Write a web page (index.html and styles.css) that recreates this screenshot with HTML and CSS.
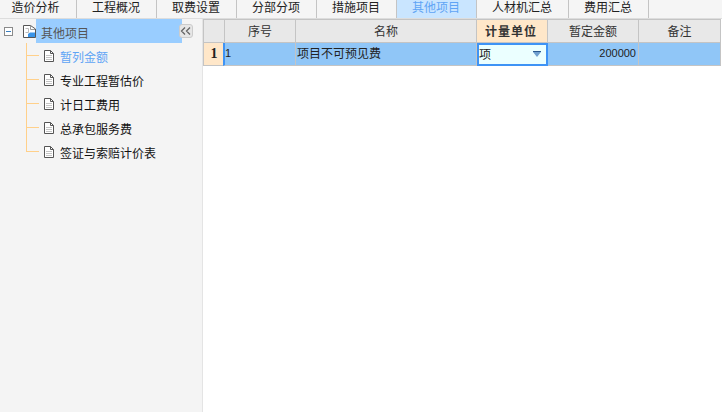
FILE: index.html
```html
<!doctype html>
<html>

<head>
  <meta charset="UTF-8" />
  <link rel="stylesheet" href="styles.css">
</head>

<body>
  <div class="tabs">
    <div class="tab">造价分析</div>
    <div class="tab">工程概况</div>
    <div class="tab">取费设置</div>
    <div class="tab">分部分项</div>
    <div class="tab">措施项目</div>
    <div class="tab active">其他项目</div>
    <div class="tab wide">人材机汇总</div>
    <div class="tab">费用汇总</div>
  </div>
  <div class="main">
    <div class="side">
      <div class="root-row">
        <div class="minus"></div>
        <svg class="folder" viewBox="0 0 13 13" xmlns="http://www.w3.org/2000/svg">
          <path d="M0.5,12.5V0.5H7.5L12.5,4V12.5Z" fill="#FFFFFF" stroke="#555555" />
          <path d="M7.5,1V4.5H12" fill="none" stroke="#999999" />
          <path d="M2.5,3.5H5.5V7.5H2.5" fill="none" stroke="#BBBBBB" />
          <path d="M5,9L7,7.5H12V12H5Z" fill="#3A94E8" />
        </svg>
        <div class="root-label">其他项目</div>
        <div class="collapse">
          <svg viewBox="0 0 12 8" xmlns="http://www.w3.org/2000/svg">
            <path d="M5,0.5L1.5,4L5,7.5M10,0.5L6.5,4L10,7.5" fill="none" stroke="#666666" stroke-width="1.3" />
          </svg>
        </div>
      </div>
      <div class="tree">
        <div class="leaf current">
          <svg class="doc" viewBox="0 0 10 12" xmlns="http://www.w3.org/2000/svg">
            <path d="M0.5,0.5H6.5L9.5,3.5V11.5H0.5Z" fill="#FFFFFF" stroke="#555555" />
            <path d="M6.5,0.5V3.5H9.5" fill="none" stroke="#555555" />
            <path d="M2,5.5H8M2,7.5H8M2,9.5H8" stroke="#C4C4C4" />
          </svg>
          <span>暂列金额</span>
        </div>
        <div class="leaf">
          <svg class="doc" viewBox="0 0 10 12" xmlns="http://www.w3.org/2000/svg">
            <path d="M0.5,0.5H6.5L9.5,3.5V11.5H0.5Z" fill="#FFFFFF" stroke="#555555" />
            <path d="M6.5,0.5V3.5H9.5" fill="none" stroke="#555555" />
            <path d="M2,5.5H8M2,7.5H8M2,9.5H8" stroke="#C4C4C4" />
          </svg>
          <span>专业工程暂估价</span>
        </div>
        <div class="leaf">
          <svg class="doc" viewBox="0 0 10 12" xmlns="http://www.w3.org/2000/svg">
            <path d="M0.5,0.5H6.5L9.5,3.5V11.5H0.5Z" fill="#FFFFFF" stroke="#555555" />
            <path d="M6.5,0.5V3.5H9.5" fill="none" stroke="#555555" />
            <path d="M2,5.5H8M2,7.5H8M2,9.5H8" stroke="#C4C4C4" />
          </svg>
          <span>计日工费用</span>
        </div>
        <div class="leaf">
          <svg class="doc" viewBox="0 0 10 12" xmlns="http://www.w3.org/2000/svg">
            <path d="M0.5,0.5H6.5L9.5,3.5V11.5H0.5Z" fill="#FFFFFF" stroke="#555555" />
            <path d="M6.5,0.5V3.5H9.5" fill="none" stroke="#555555" />
            <path d="M2,5.5H8M2,7.5H8M2,9.5H8" stroke="#C4C4C4" />
          </svg>
          <span>总承包服务费</span>
        </div>
        <div class="leaf">
          <svg class="doc" viewBox="0 0 10 12" xmlns="http://www.w3.org/2000/svg">
            <path d="M0.5,0.5H6.5L9.5,3.5V11.5H0.5Z" fill="#FFFFFF" stroke="#555555" />
            <path d="M6.5,0.5V3.5H9.5" fill="none" stroke="#555555" />
            <path d="M2,5.5H8M2,7.5H8M2,9.5H8" stroke="#C4C4C4" />
          </svg>
          <span>签证与索赔计价表</span>
        </div>
      </div>
    </div>
    <div class="grid">
      <div class="cell head corner"></div>
      <div class="cell head">序号</div>
      <div class="cell head">名称</div>
      <div class="cell head picked">计量单位</div>
      <div class="cell head">暂定金额</div>
      <div class="cell head">备注</div>
      <div class="cell rownum">1</div>
      <div class="cell body first">1</div>
      <div class="cell body name">项目不可预见费</div>
      <div class="cell editor">
        <span>项</span>
        <div class="arrow"></div>
      </div>
      <div class="cell body money">200000</div>
      <div class="cell body"></div>
    </div>
  </div>
</body>

</html>
```

FILE: styles.css
```css
html,
body {
  margin: 0;
  padding: 0;
  height: 100%;
  overflow: hidden;
}

body {
  display: flex;
  flex-direction: column;
  background-color: #FFFFFF;
  color: #222222;
  font-family: "Noto Sans CJK SC", "Liberation Sans", sans-serif;
  font-size: 12px;
}

.tabs {
  display: flex;
  height: 18px;
  flex-shrink: 0;
  background-color: #F5F5F5;
  border-bottom: 1px solid #DDDDDD;
}

.tab {
  box-sizing: border-box;
  width: 80px;
  height: 18px;
  line-height: 13px;
  padding-right: 1px;
  text-align: center;
  background-color: #F5F5F5;
  border-right: 1px solid #C4C4C4;
}

.tab:first-child {
  width: 77px;
  padding-right: 5px;
}

.tab.wide {
  width: 92px;
}

.tab.active {
  background-color: #C9E5FF;
  color: #5FA4F5;
}

.main {
  display: flex;
  flex: 1;
}

.side {
  width: 202px;
  background-color: #F4F4F4;
  border-right: 1px solid #E4E4E4;
}

.root-row {
  display: flex;
  align-items: center;
  height: 24px;
  padding-left: 4px;
}

.minus {
  position: relative;
  width: 7px;
  height: 7px;
  margin-right: 10px;
  background-color: #FFFFFF;
  border: 1px solid #8A8A8A;
}

.minus::after {
  content: "";
  position: absolute;
  left: 1px;
  top: 3px;
  width: 5px;
  height: 1px;
  background-color: #3A7FC0;
}

.folder {
  width: 13px;
  height: 13px;
}

.root-label {
  width: 146px;
  height: 24px;
  line-height: 28px;
  padding-left: 5px;
  box-sizing: border-box;
  background-color: #99CDFF;
  color: #555555;
}

.collapse {
  display: flex;
  align-items: center;
  justify-content: center;
  width: 14px;
  height: 14px;
  background-color: #E6E6E6;
  border: 1px solid #CCCCCC;
  border-radius: 3px;
  box-sizing: border-box;
  margin-left: -3px;
  position: relative;
}

.collapse svg {
  width: 12px;
  height: 8px;
}

.tree {
  position: relative;
  margin-left: 26px;
  padding-top: 1px;
}

.tree::before {
  content: "";
  position: absolute;
  left: 0;
  top: 0;
  width: 1px;
  height: 109px;
  background-color: #FFD08A;
}

.leaf {
  position: relative;
  display: flex;
  align-items: center;
  height: 24px;
  padding-left: 18px;
  color: #111111;
}

.leaf::before {
  content: "";
  position: absolute;
  left: 1px;
  top: 11px;
  width: 12px;
  height: 1px;
  background-color: #FFD08A;
}

.doc {
  width: 10px;
  height: 12px;
  margin-right: 6px;
}

.leaf.current {
  color: #5FA4F5;
}

.grid {
  flex: 1;
  display: grid;
  grid-template-columns: 22px 71px 181px 71px 91px 82px;
  grid-template-rows: 24px 23px;
  align-content: start;
}

.cell {
  box-sizing: border-box;
  border-right: 1px solid #C4C4C4;
  border-bottom: 1px solid #C4C4C4;
  line-height: 22px;
}

.head {
  background-color: #E8E8E8;
  text-align: center;
  color: #333333;
  border-top: 1px solid #C4C4C4;
  line-height: 21px;
}

.corner,
.rownum {
  border-left: 1px solid #C4C4C4;
}

.picked {
  background-color: #FFE7C9;
  font-weight: 700;
  letter-spacing: 1px;
  padding-right: 2px;
}

.rownum {
  background-color: #FFE7C9;
  text-align: center;
  font-family: "Liberation Serif", serif;
  font-weight: 700;
  font-size: 14px;
  color: #222222;
}

.body {
  background-color: #90C6F7;
  padding-left: 1px;
  line-height: 20px;
}

.first {
  margin-left: -2px;
  border-left: 2px solid #3E93F5;
  padding-left: 0;
  font-family: "Liberation Sans", sans-serif;
  font-size: 11px;
}

.money {
  text-align: right;
  padding-right: 2px;
  font-family: "Liberation Sans", sans-serif;
  font-size: 11px;
}

.editor {
  display: flex;
  align-items: center;
  justify-content: space-between;
  padding: 0 5px 3px 0;
  background-color: #EBFFFF;
  border: 2px solid #3E93F5;
  line-height: 17px;
}

.arrow {
  width: 0;
  height: 0;
  margin-top: 3px;
  border-left: 4px solid transparent;
  border-right: 4px solid transparent;
  border-top: 5px solid #6FA0CF;
  box-shadow: 0 -1px 0 #2A5A90;
}
```
